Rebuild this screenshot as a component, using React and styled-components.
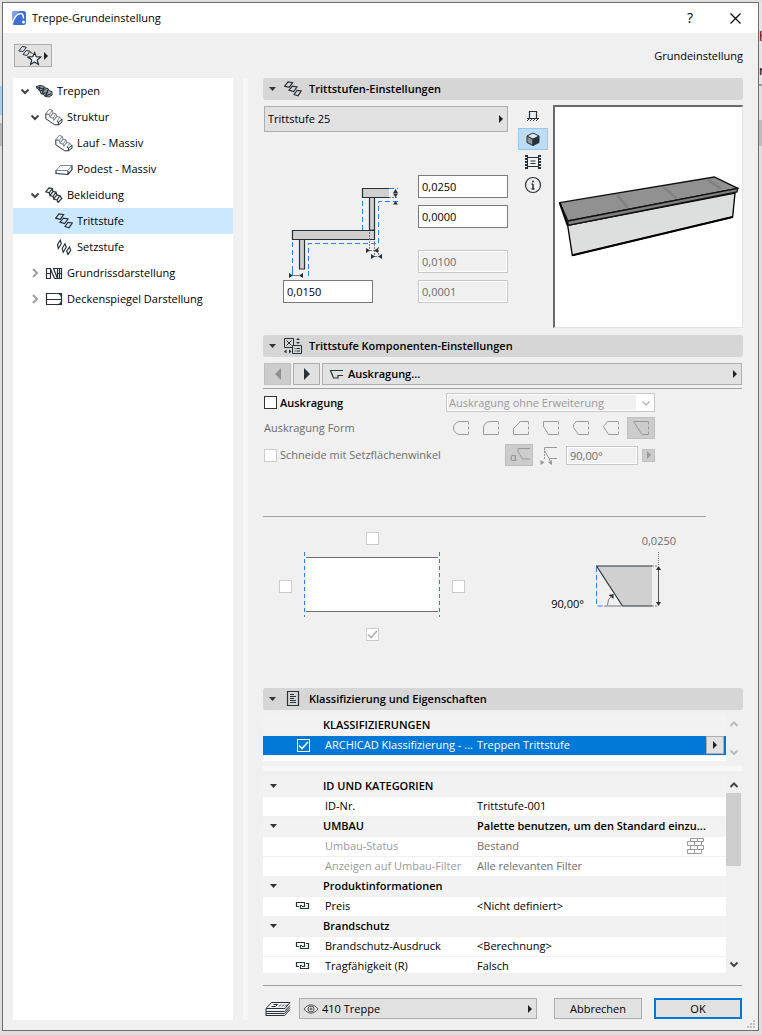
import React, { useState } from 'react';
import styled, { createGlobalStyle } from 'styled-components';

const INK = '#26323a';
const BLUE = '#2a7fff';

const GlobalStyle = createGlobalStyle`
  * {
    box-sizing: border-box;
  }

  body {
    margin: 0;
    background: #dedede;
  }

  body, button, input, select {
    font-family: "Open Sans", "Noto Sans", sans-serif;
    font-size: 11px;
    line-height: 16px;
    color: #000;
  }

  svg {
    display: block;
    flex: none;
  }
`;

const Desktop = styled.div`
  display: flex;
  min-height: 100vh;
  padding: 2px 0 4px;
`;

const Backdrop = styled.div`
  flex: none;
  width: ${props => props.$width};
  overflow: hidden;
  background: ${props => props.$fill};
`;

const Snippet = styled.div`
  height: 34px;
  color: ${props => props.$color};
  font-size: 12px;
  font-weight: 600;

  &:first-child {
    margin-top: 27px;
  }
`;

const Window = styled.main`
  flex: 1;
  min-width: 0;
  display: flex;
  flex-direction: column;
  border: 1px solid #6e6e6e;
  background: #f0f0f0;
`;

const TitleBar = styled.header`
  display: flex;
  align-items: center;
  height: 30px;
  padding: 0 13px 0 8px;
  gap: 5px;
  background: #fff;
`;

const Title = styled.h1`
  flex: 1;
  margin: 0;
  font-size: 11px;
  font-weight: normal;
`;

const TitleButton = styled.button`
  display: flex;
  align-items: center;
  justify-content: center;
  width: 20px;
  height: 20px;
  margin-left: 20px;
  padding: 0;
  border: 0;
  background: none;
  font-size: 14px;
`;

const Toolbar = styled.div`
  display: flex;
  align-items: center;
  justify-content: space-between;
  height: 45px;
  padding: 0 15px 0 11px;
`;

const FavoriteButton = styled.button`
  display: flex;
  align-items: center;
  width: 38px;
  height: 23px;
  padding: 0 3px;
  border: 1px solid #adadad;
  background: #e1e1e1;
`;

const Body = styled.div`
  flex: 1;
  display: flex;
  padding: 0 15px 0 10px;
`;

const Tree = styled.ul`
  flex: none;
  width: 220px;
  margin: 0;
  padding: 0;
  list-style: none;
  background: #fff;
`;

const TreeRow = styled.li`
  display: flex;
  align-items: center;
  gap: 4px;
  height: 26px;
  padding-left: ${props => 6 + props.$level * 10}px;
  background: ${props => (props.$selected ? '#cce8ff' : 'transparent')};
  cursor: default;
`;

const TreeSlot = styled.span`
  display: flex;
  justify-content: center;
  width: ${props => props.$width};
`;

const Splitter = styled.div`
  flex: none;
  width: 5px;
  margin: 0 15px 0 10px;
  background: #f7f7f7;
`;

const Content = styled.div`
  flex: 1;
  min-width: 0;
`;

const SectionHeader = styled.h2`
  display: flex;
  align-items: center;
  height: 22px;
  margin: 0;
  padding: 0 5px;
  gap: 7px;
  border-radius: 3px;
  background: #d6d6d6;
  font-size: 11px;
  font-weight: 600;
`;

const HeaderIcon = styled.span`
  display: flex;
  justify-content: center;
  width: 18px;
`;

const Treads = styled.div`
  display: flex;
  padding: 5px 0 7px 1px;
`;

const TreadForm = styled.div`
  flex: 1;
  min-width: 0;
  padding-top: 1px;
`;

const PickerFrame = styled.label`
  flex: ${props => (props.$grow ? 1 : 'none')};
  display: flex;
  align-items: center;
  height: ${props => props.$height};
  padding: 0 2px 0 ${props => (props.$inset ? props.$inset : '3px')};
  gap: ${props => (props.$inset ? '5px' : '3px')};
  border: 1px solid #adadad;
  background: #e1e1e1;
`;

const PickerSelect = styled.select`
  flex: 1;
  min-width: 0;
  padding: 0;
  border: 0;
  outline: 0;
  background: transparent;
  appearance: none;
  font-weight: ${props => (props.$bold ? 600 : 'normal')};
`;

const Measures = styled.div`
  display: flex;
  justify-content: space-between;
  padding: 43px 0 0 19px;
`;

const FieldStack = styled.div`
  display: flex;
  flex-direction: column;
  gap: 7px;
`;

const FieldPair = styled.div`
  display: flex;
  flex-direction: column;
  gap: 7px;

  & + & {
    margin-top: 15px;
  }
`;

const Field = styled.input`
  width: ${props => props.$width || '90px'};
  height: ${props => props.$height || '23px'};
  padding: 0 3px;
  border: 1px solid #7a7a7a;
  border-radius: 0;
  background: #fff;

  &:disabled {
    border-color: #c8c8c8;
    background: #f0f0f0;
    box-shadow: inset 0 0 0 1px #fff;
    color: #6d6d6d;
  }
`;

const ViewModes = styled.div`
  display: flex;
  flex-direction: column;
  gap: 1px;
  margin: 0 5px 0 10px;
`;

const ViewButton = styled.button`
  display: flex;
  align-items: center;
  justify-content: center;
  width: 30px;
  height: 22px;
  padding: 0;
  border: 1px solid ${props => (props.$active ? '#90c8f6' : 'transparent')};
  background: ${props => (props.$active ? '#c0dcf3' : 'transparent')};
`;

const Preview = styled.div`
  width: 190px;
  height: 223px;
  border: solid;
  border-width: 2px 1px 1px 2px;
  border-color: #696969 #e3e3e3 #e3e3e3 #696969;
  background: #fff;
`;

const Pager = styled.div`
  display: flex;
  gap: 2px;
  padding: 6px 1px 3px;
`;

const PagerButton = styled.button`
  display: flex;
  align-items: center;
  justify-content: center;
  width: 27px;
  height: 22px;
  padding: 0;
  border: 1px solid #adadad;
  background: #e1e1e1;

  &:disabled {
    border-color: #bfbfbf;
    background: #ccc;
  }
`;

const Rule = styled.hr`
  height: 1px;
  margin: ${props => props.$top || '0'} ${props => props.$right || '1px'} 0 0;
  border: 0;
  background: #a0a0a0;
`;

const SettingRows = styled.div`
  display: flex;
  flex-direction: column;
  gap: 5px;
  padding: 4px 0 50px 1px;
`;

const SettingRow = styled.div`
  display: flex;
  align-items: center;
  gap: 3px;
  height: ${props => props.$height};
  padding-right: 88px;
`;

const RowLabel = styled.label`
  flex: 1;
  display: flex;
  align-items: center;
  gap: 3px;
  color: ${props => (props.$muted ? '#6d6d6d' : '#000')};
  font-weight: ${props => (props.$bold ? 600 : 'normal')};
`;

const checkMark = color =>
  `url("data:image/svg+xml,%3Csvg xmlns='http://www.w3.org/2000/svg' viewBox='0 0 11 11'%3E%3Cpath d='M1 5.500l3 3 6-6.500' fill='none' stroke='%23${color}' stroke-width='1.700'/%3E%3C/svg%3E")`;

const Check = styled.input`
  flex: none;
  width: 13px;
  height: 13px;
  margin: 0;
  border: 1px solid ${props => (props.$inverse ? '#fff' : '#333')};
  background: ${props => (props.$inverse ? 'transparent' : '#fff')};
  appearance: none;

  &:checked {
    background-image: ${checkMark('ffffff')};
  }

  &:disabled {
    border-color: #ccc;
  }

  &:disabled:checked {
    background-image: ${checkMark('b0b0b0')};
  }
`;

const ComboFrame = styled.span`
  display: flex;
  align-items: center;
  width: 209px;
  height: 19px;
  padding: 1px 3px 1px 1px;
  border: 1px solid #c8c8c8;
  background: #fff;
`;

const ComboSelect = styled.select`
  flex: 1;
  min-width: 0;
  height: 15px;
  margin-right: 5px;
  padding: 0 0 0 1px;
  border: 0;
  background: #f0f0f0;
  appearance: none;
  line-height: 15px;

  &:disabled {
    color: #9a9a9a;
    opacity: 1;
  }
`;

const ShapeGroup = styled.div`
  display: flex;
  gap: 2px;
`;

const ShapeButton = styled.button`
  display: flex;
  align-items: center;
  justify-content: center;
  width: 28px;
  height: 22px;
  padding: 0;
  border: 1px solid ${props => (props.$active ? '#bfbfbf' : 'transparent')};
  background: ${props => (props.$active ? '#ccc' : 'transparent')};
`;

const StepButton = styled.button`
  display: flex;
  align-items: center;
  justify-content: center;
  width: 13px;
  height: 13px;
  margin: 0 0 0 1px;
  padding: 0;
  border: 1px solid #bfbfbf;
  background: #ccc;
`;

const Figures = styled.div`
  display: flex;
  justify-content: space-between;
  padding: 15px 67px 47px 16px;
`;

const EdgePicker = styled.div`
  display: grid;
  grid-template-columns: 13px 136px 13px;
  grid-template-rows: 13px 69px 13px;
  gap: 7px 12px;
  place-items: center;
  grid-template-areas:
    ". top ."
    "left plate right"
    ". bottom .";
`;

const EdgeCheck = styled(Check)`
  grid-area: ${props => props.$side};
`;

const Plate = styled.div`
  grid-area: plate;
`;

const AngleFigure = styled.div`
  display: grid;
  grid-template-columns: auto 80px;
  align-content: start;
  gap: 3px 12px;
  padding-top: 1px;
`;

const FigureLabel = styled.span`
  align-self: end;
  justify-self: end;
  grid-column: ${props => props.$column};
  color: ${props => (props.$muted ? '#6d6d6d' : '#000')};
`;

const Pane = styled.div`
  display: flex;
  height: ${props => props.$height};
  margin-top: 5px;
  overflow: hidden;
`;

const PaneBody = styled.div`
  flex: 1;
  min-width: 0;
  background: #fff;
  overflow: hidden;
`;

const PaneSplitter = styled.div`
  height: 5px;
  margin-top: 5px;
  background: #f7f7f7;
`;

const Grid = styled.table`
  width: 100%;
  table-layout: fixed;
  border-collapse: collapse;
`;

const GridRow = styled.tr`
  height: 20px;
  color: ${props => (props.$selected ? '#fff' : props.$muted ? '#9a9a9a' : '#000')};
  background: ${props => (props.$selected ? '#0078d7' : props.$group ? '#f2f2f2' : '#fff')};
  border-bottom: 1px solid #f0f0f0;
  font-weight: ${props => (props.$group ? 600 : 'normal')};
`;

const Cell = styled.td`
  height: 20px;
  padding: 0 0 0 ${props => props.$indent || '0'};
  line-height: 18px;
  white-space: nowrap;
  text-align: left;
  font-weight: inherit;
  color: ${props => props.$color || 'inherit'};
`;

const CellCenter = styled.div`
  display: flex;
  align-items: center;
  justify-content: ${props => props.$align || 'center'};
`;

const MoreButton = styled.button`
  display: flex;
  align-items: center;
  justify-content: center;
  width: 18px;
  height: 18px;
  margin-right: 2px;
  padding: 0;
  border: 1px solid #adadad;
  background: #e1e1e1;
`;

const Scrollbar = styled.div`
  flex: none;
  display: flex;
  flex-direction: column;
  align-items: center;
  width: 17px;
  padding: 4px 2px 4px 0;
`;

const ScrollThumb = styled.div`
  width: 15px;
  height: 73px;
  margin-top: 3px;
  background: #cdcdcd;
`;

const ScrollSpace = styled.div`
  flex: 1;
`;

const Footer = styled.footer`
  display: flex;
  align-items: center;
  gap: 12px;
  padding: 12px 1px 0 2px;
`;

const LayerPicker = styled.div`
  flex: 1;
  display: flex;
  align-items: center;
  gap: 8px;
  margin-right: 5px;
`;

const DialogButton = styled.button`
  width: 88px;
  height: 21px;
  padding: 0;
  border: ${props => (props.$primary ? '2px solid #0078d7' : '1px solid #adadad')};
  background: #e1e1e1;
  line-height: 14px;
`;

const GripRow = styled.div`
  display: flex;
  justify-content: flex-end;
  height: 10px;
  padding-right: 2px;
`;

const ArrowRight = ({ color = '#222' }) => (
  <svg width="8" height="8" viewBox="0 0 8 8">
    <path d="M2 0l4 4-4 4z" fill={color} />
  </svg>
);

const Caret = () => (
  <svg width="9" height="6" viewBox="0 0 9 6">
    <path d="M1 1h7L4.500 5z" fill="#333" />
  </svg>
);

const Chevron = ({ dir = 'down', color = '#444', thin }) => {
  const paths = { down: 'M1.500 3.500L5 7l3.500-3.500', up: 'M1.500 7L5 3.500 8.500 7', right: 'M3 1l4 4-4 4' };
  return (
    <svg width="10" height="10" viewBox="0 0 10 10">
      <path d={paths[dir]} fill="none" stroke={color} strokeWidth={thin ? 1.2 : 2} />
    </svg>
  );
};

const Icon = ({ w = 18, h = 16, color = INK, children }) => (
  <svg width={w} height={h} viewBox={`0 0 ${w} ${h}`} fill="none" stroke={color}>
    {children}
  </svg>
);

const TreadIcon = () => (
  <Icon>
    <path d="M.7 5.200L4 1l4.600.700-3.300 4.600zM5 9.200l3.500-4L13 6l-3.400 4.500zM10 13.500L13 9.300l4.300.700-3.300 4.700z" strokeWidth="1.200" />
  </Icon>
);

const RiserIcon = () => (
  <Icon>
    <path d="M2.500 5.500l2.800-4.300 1 3.500-3 4.800zM7.200 9.200L10 4.800l1.200 3.500-3 5zM11.700 12l2.800-4 1.200 3.300-2.800 4.200z" strokeWidth="1.200" />
  </Icon>
);

const StairIcon = () => (
  <Icon>
    <path d="M1 4.500l2.500-2 5 .5 1.500 2 3 .500 1 2.200 3 .800v3.500l-3 2-4-.500-1.500-2.300-2.500-.500L5 7.500z" fill="#9aa1a5" />
    <path d="M1 3.500l6 2.200 3-1.200M4.500 8l6-1.500M6.500 11l6.500-2M9.500 13l6.500-2M5 3.500L4 7.500M9 4.500L7.500 10M13 6.500l-2 6" strokeWidth="1.200" />
  </Icon>
);

const SolidStairIcon = () => (
  <Icon w={18} h={18}>
    <path
      d="M.8 5.800L4 1.500l3.300.700-3 4.300zM.8 5.800L4.300 6.500 5 9.200l3-4-.7-3M5 9.200l3-4 3 .700-3 4.300zM8 9.900l.8 2.500 3-4-.8-2.500M8.800 12.400l3-4 3 .700-2.800 4.300M14.800 9.100l2 2.500"
      stroke="#7d868b"
    />
    <path d="M.8 5.800v5l9 6h3.700l3.500-2.600v-3l-3.500 2.800-1.500-.600M13.500 14v2.800" />
  </Icon>
);

const LandingIcon = () => (
  <Icon>
    <path d="M1 9.500l4.500-5H17L13 9.500z" stroke="#7d868b" />
    <path d="M1 9.500v3l12 1L17 8.500v-4M13 10v3.500" strokeWidth="1.200" />
  </Icon>
);

const CladdingIcon = () => (
  <Icon>
    <path d="M.8 4.800L4 .8l3.300.700-3 4.300zM4.300 5.800L5 8.500l3-4-.700-3M5 8.500l3-4 3 .700-3 4.300zM8 9.500l.8 2.500 3-4-.8-2.800M8.800 12l3-4 3 .700-2.800 4.300zM12 13l1 2.500 3.800-4-2-2.800" strokeWidth="1.200" />
  </Icon>
);

const FloorPlanIcon = () => (
  <Icon>
    <path
      d="M1.500 3.500v10h4v-10zM1.500 8.500h4M5.500 4l4 9.500M8 3.500h8.500v10H9.500M8.500 3.500l4 10v-10M14.500 3.500v10M12.500 8.500h4"
      strokeWidth="1.200"
    />
  </Icon>
);

const CeilingIcon = () => (
  <Icon>
    <path d="M1.500 2.500h15v11h-15zM1.500 8.500h15M13.500 2.500q3 1 3 4M13.500 13.500q3-1 3-4" strokeWidth="1.200" />
  </Icon>
);

const ComponentIcon = () => (
  <Icon w={20} h={18}>
    <path d="M1.500 1.500h9v9h-9zM3.500 3.500l5 5M8.500 3.500l-5 5" />
    <path d="M9.500 8.500h9v8h-9z" fill="#d6d6d6" />
    <path d="M11.500 11.500h1M13.500 11.500H17M11.500 14h1M13.500 14H17" />
    <path d="M13 3h4l-2-2zM13 5h4l-2 2zM3.500 12.500v4l-2.500-2zM6 12.500v4l2.500-2z" fill={INK} stroke="none" />
  </Icon>
);

const SheetIcon = () => (
  <Icon w={14} h={16}>
    <path d="M1.500.500h11v14h-11z" strokeWidth="1.200" />
    <path d="M4 3.500h4M4 5.500h6M4 7.500h4M4 9.500h6M4 11.500h6" />
  </Icon>
);

const NosingIcon = () => (
  <Icon w={14} h={10}>
    <path d="M14 1.500H1.500L4.500 9H9V6.500h5" strokeWidth="1.200" />
  </Icon>
);

const FavoriteIcon = () => (
  <Icon w={24} h={21}>
    <path d="M.8 6L4 1.500l4.300.700L5.200 6.500zM5 9.500L8.200 5.500l3.800.700L9 10.500zM9.500 12.500l2 1M12 7l2.500 1.500" />
    <path
      d="M16.500 7.500l1.700 4.200 4.500.300-3.500 3 1.200 4.500-3.900-2.500-3.900 2.500 1.200-4.500-3.500-3 4.500-.300z"
      fill="#f6f6f6"
      strokeWidth="1.200"
    />
  </Icon>
);

const AppIcon = () => (
  <svg width="16" height="16" viewBox="0 0 16 16">
    <rect x="1" y="1" width="14" height="14" rx="2.500" fill="#3f6fd0" />
    <path d="M1 3.500Q1 1 3.500 1H9Q3 4 1 12z" fill="#7ea2e8" />
    <path d="M1 14.500C2.500 8 6 3.500 9.500 3.500c2.500 0 3 2 3 5" fill="none" stroke="#fff" strokeWidth="1.500" />
    <circle cx="12.500" cy="12" r="1.500" fill="#fff" />
  </svg>
);

const FloorViewIcon = () => (
  <Icon w={14} h={12}>
    <path d="M3.500 8.500v-7h7v7M1 8.500h12" strokeWidth="1.200" />
    <path d="M1 11l2-2M4 11l2-2M7 11l2-2M10 11l2-2" />
  </Icon>
);

const CubeIcon = () => (
  <Icon w={14} h={14}>
    <path d="M1 4v6.500L7 13.500V7z" fill="#8d9498" />
    <path d="M13 4v6.500L7 13.500V7z" fill={INK} />
    <path d="M1 4l6-3 6 3-6 3z" fill="#dbe9f4" />
  </Icon>
);

const FilmIcon = () => (
  <Icon w={18} h={16}>
    <path d="M3.500 3.500h11M3.500 12.500h11M6.500 7h5M6.500 9.500h5" strokeWidth="1.200" />
    <path d="M3.500 1v14M14.500 1v14" />
    <path d="M2 1v14M16 1v14" strokeWidth="2" strokeDasharray="2 1" />
  </Icon>
);

const InfoIcon = () => (
  <Icon w={18} h={18}>
    <circle cx="9" cy="9" r="7.500" strokeWidth="1.200" />
    <path d="M9 8v5M7.500 8H9M7.500 13h3" strokeWidth="1.500" />
    <circle cx="9" cy="5.500" r="1" fill={INK} stroke="none" />
  </Icon>
);

const LinkIcon = () => (
  <Icon w={16} h={10}>
    <path d="M4 5.500H1.500v-4h8v4H7M11 2.500h2.500v5h-8v-3H7" strokeWidth="1.200" />
  </Icon>
);

const BrickIcon = () => (
  <Icon w={18} h={16} color="#9a9a9a">
    <path d="M3.500.500h13v3h-13zM.500 3.500h14v4H.500zM3.500 7.500h13v4h-13zM.500 11.500h14v4H.500zM10.500.500v3M7.500 3.500v4M10.500 7.500v4M7.500 11.500v4" />
  </Icon>
);

const EyeIcon = () => (
  <Icon w={16} h={12} color="#555">
    <path d="M1 6c4-5.500 10-5.500 14 0-4 5.500-10 5.500-14 0z" />
    <circle cx="8" cy="6" r="3" />
    <circle cx="8" cy="6" r="1" />
  </Icon>
);

const LayersIcon = () => (
  <Icon w={26} h={16}>
    <path d="M1 7.500L6.500 1.500H25L20 7.500zM1 10.500h18.500l5.500-6M1 12.500h18.500l5.500-6M1 14.500h18.500L25 8.500M1 8v7" />
    <path d="M8.500 3.500h4l-2 2H6.500M16 3.500l-2 2M19 3.500l-2 2M22 3.500l-2 2" />
  </Icon>
);

const shapePaths = [
  'M16 1.500H8a6.500 6.500 0 000 13h8',
  'M16 1.500H8a6.500 6.500 0 00-6.500 6.500v6.500H16',
  'M16 1.500H8.500l-7 7v6H16',
  'M16 1.500H1.500v5l5 8H16',
  'M16 1.500H4.500l-3 3v3l5 7H16',
  'M16 1.500H5.500l-4 5 5 8H16',
  'M16 1.500H1.500l8.500 13h6',
];

const ShapeIcon = ({ d }) => (
  <Icon w={18} h={16} color="#999">
    <path d={d} />
    <path d="M16.500 1.500v13" strokeDasharray="3 2" />
  </Icon>
);

const AngleIcon = () => (
  <Icon w={24} h={20} color="#999">
    <path d="M23 3.500H11v3l4.500 7.500H23" />
    <text x="3" y="16" fontSize="11" fill="#8a8a8a" stroke="none">α</text>
  </Icon>
);

const OffsetIcon = () => (
  <Icon w={22} h={20} color="#999">
    <path d="M19 2.500H6.500v3l4.500 8h8" />
    <path d="M6.500 6v9M11.500 14v3" strokeDasharray="2 1" />
    <path d="M2.500 15v5l4-2.500zM14 15v5l-4-2.500z" fill="#999" stroke="none" />
  </Icon>
);

const TreadDrawing = () => (
  <svg width="120" height="96" viewBox="0 0 120 96" fill="none" stroke={INK}>
    <path d="M9.500 55.500h82v9h-82zM106 22.500H79.500v-9H106" fill="#d0d0d0" strokeWidth="1.200" />
    <path d="M86.500 23v32h5V23M16.500 65v29h5V65" fill="#d0d0d0" strokeWidth="1.200" />
    <path
      d="M106 13.500h9M79.500 26v29M115 26.500H95.500v42h-70V96M9.500 67v29"
      stroke={BLUE}
      strokeDasharray="5 3"
    />
    <path d="M86.500 57v19M91.500 66v16M106 22.500h9M95.500 72v10M84 75.500h10M89 81.500h10" stroke="#777" strokeDasharray="2 1" />
    <path
      d="M110 18l2.500-4 2.500 4zM110 18.500l2.500 4 2.500-4zM110 29.500l2.500-3.500 2.500 3.500zM83 73v5l4-2.500zM95 73v5l-4-2.500zM88 79v5l4-2.500zM99 79v5l-4-2.500z"
      fill={INK}
      stroke="none"
    />
  </svg>
);

const GapArrows = () => (
  <svg width="30" height="9" viewBox="0 0 30 9">
    <path d="M6 2v5l4-2.500zM20 2v5l-4-2.500z" fill={INK} />
    <path d="M10 4.500h6" stroke="#777" />
    <path d="M9.500 0v8M25.500 0v8" stroke={BLUE} strokeDasharray="5 3" />
  </svg>
);

const StepPreview = () => (
  <svg width="186" height="219" viewBox="134 36 558 657">
    <path d="M172 391L674 294 667 366 186 481z" fill="#dddede" stroke="#000" strokeWidth="4" />
    <path d="M186 481L667 366" stroke="#000" strokeWidth="6" />
    <path d="M148 323L612 246 682 280 173 378z" fill="#919191" stroke="#111" strokeWidth="4" />
    <path d="M320 298l32 40M458 275l40 34M592 254l40 28" stroke="#828282" strokeWidth="8" />
    <path d="M173 378L682 280 680 291 172 391z" fill="#808080" stroke="#111" strokeWidth="4" />
    <path d="M148 323L172 391" stroke="#000" strokeWidth="6" />
  </svg>
);

const PlateDrawing = () => (
  <svg width="136" height="69" viewBox="0 0 136 69">
    <path d="M2 5.500h132v54H2z" fill="#fff" />
    <path d="M2 5.500h132M2 59.500h132" stroke="#6d6d6d" />
    <path d="M.5 0v65M135.500 0v65" stroke={BLUE} strokeDasharray="4 3" />
  </svg>
);

const AngleDrawing = () => (
  <svg width="80" height="60" viewBox="0 0 80 60" fill="none" stroke={INK}>
    <path d="M.5 14L26.500 54H56V14z" fill="#d0d0d0" stroke="none" />
    <path d="M56 14H.5L26.500 54H56" strokeWidth="1.200" />
    <path d="M.5 15v39h7" stroke={BLUE} strokeDasharray="5 3" />
    <path d="M62.500 0v14" stroke="#777" strokeDasharray="1 1" />
    <path d="M56 14h6M56 54h6" stroke="#777" strokeDasharray="2 1" />
    <path d="M62.500 16v36" stroke="#555" />
    <path d="M60 18l2.500-4 2.500 4zM60 50l2.500 4 2.500-4zM12.500 43l5-1v5z" fill={INK} stroke="none" />
    <path d="M8 54h17M11.500 53q0-6 4-9" stroke="#777" />
  </svg>
);

const Grip = () => (
  <svg width="9" height="9" viewBox="0 0 9 9" fill="#bfbfbf">
    <path d="M6 0h2v2H6zM3 3h2v2H3zM6 3h2v2H6zM0 6h2v2H0zM3 6h2v2H3zM6 6h2v2H6z" />
  </svg>
);

const treeItems = [
  { label: 'Treppen', level: 0, arrow: 'down', Glyph: StairIcon },
  { label: 'Struktur', level: 1, arrow: 'down', Glyph: SolidStairIcon },
  { label: 'Lauf - Massiv', level: 2, Glyph: SolidStairIcon },
  { label: 'Podest - Massiv', level: 2, Glyph: LandingIcon },
  { label: 'Bekleidung', level: 1, arrow: 'down', Glyph: CladdingIcon },
  { label: 'Trittstufe', level: 2, Glyph: TreadIcon },
  { label: 'Setzstufe', level: 2, Glyph: RiserIcon },
  { label: 'Grundrissdarstellung', level: 1, arrow: 'right', Glyph: FloorPlanIcon },
  { label: 'Deckenspiegel Darstellung', level: 1, arrow: 'right', Glyph: CeilingIcon },
];

const properties = [
  { name: 'ID UND KATEGORIEN', group: true },
  { name: 'ID-Nr.', value: 'Trittstufe-001' },
  { name: 'UMBAU', value: 'Palette benutzen, um den Standard einzu...', group: true },
  { name: 'Umbau-Status', value: 'Bestand', muted: true, bricks: true },
  { name: 'Anzeigen auf Umbau-Filter', value: 'Alle relevanten Filter', muted: true },
  { name: 'Produktinformationen', group: true },
  { name: 'Preis', value: '<Nicht definiert>', linked: true },
  { name: 'Brandschutz', group: true },
  { name: 'Brandschutz-Ausdruck', value: '<Berechnung>', linked: true },
  { name: 'Tragfähigkeit (R)', value: 'Falsch', linked: true },
];

const Picker = ({ label, value, icon, bold, grow, inset, height = '22px' }) => (
  <PickerFrame $grow={grow} $inset={inset} $height={height}>
    {icon}
    <PickerSelect aria-label={label} $bold={bold}>
      <option>{value}</option>
    </PickerSelect>
    <ArrowRight />
  </PickerFrame>
);

const Section = ({ title, icon }) => (
  <SectionHeader>
    <Caret />
    <HeaderIcon>{icon}</HeaderIcon>
    {title}
  </SectionHeader>
);

const GridColumns = () => (
  <colgroup>
    <col style={{ width: 20 }} />
    <col style={{ width: 40 }} />
    <col style={{ width: 152 }} />
    <col />
    <col style={{ width: 39 }} />
  </colgroup>
);

const TreadSettings = () => {
  const [mode, setMode] = useState('3D');
  const modes = [
    ['Grundriss', FloorViewIcon],
    ['3D', CubeIcon],
    ['Vorschau', FilmIcon],
    ['Info', InfoIcon],
  ];

  return (
    <Treads>
      <TreadForm>
        <Picker label="Trittstufe" value="Trittstufe 25" height="26px" />
        <Measures>
          <div>
            <TreadDrawing />
            <GapArrows />
            <Field aria-label="Abstand" defaultValue="0,0150" />
          </div>
          <FieldStack>
            <FieldPair>
              <Field aria-label="Dicke" defaultValue="0,0250" />
              <Field aria-label="Fuge" defaultValue="0,0000" />
            </FieldPair>
            <FieldPair>
              <Field aria-label="Setzstufe Dicke" defaultValue="0,0100" disabled />
              <Field aria-label="Setzstufe Fuge" defaultValue="0,0001" disabled />
            </FieldPair>
          </FieldStack>
        </Measures>
      </TreadForm>
      <ViewModes>
        {modes.map(([name, Glyph]) => (
          <ViewButton key={name} aria-label={name} $active={mode === name} onClick={() => setMode(name)}>
            <Glyph />
          </ViewButton>
        ))}
      </ViewModes>
      <Preview>
        <StepPreview />
      </Preview>
    </Treads>
  );
};

const ComponentSettings = () => (
  <>
    <Pager>
      <PagerButton aria-label="Zurück" disabled>
        <svg width="12" height="12" viewBox="0 0 12 12"><path d="M9 0v12L3 6z" fill="#8f8f8f" /></svg>
      </PagerButton>
      <PagerButton aria-label="Weiter">
        <svg width="12" height="12" viewBox="0 0 12 12"><path d="M3 0v12l6-6z" fill={INK} /></svg>
      </PagerButton>
      <Picker label="Seite" value="Auskragung..." icon={<NosingIcon />} bold grow inset="6px" />
    </Pager>
    <Rule />
    <SettingRows>
      <SettingRow $height="19px">
        <RowLabel $bold>
          <Check type="checkbox" />
          Auskragung
        </RowLabel>
        <ComboFrame>
          <ComboSelect aria-label="Auskragung Erweiterung" disabled>
            <option>Auskragung ohne Erweiterung</option>
          </ComboSelect>
          <Chevron thin color="#aaa" />
        </ComboFrame>
      </SettingRow>
      <SettingRow $height="22px">
        <RowLabel as="span" $muted>Auskragung Form</RowLabel>
        <ShapeGroup>
          {shapePaths.map((d, i) => (
            <ShapeButton key={d} aria-label={`Form ${i + 1}`} disabled $active={i === 6}>
              <ShapeIcon d={d} />
            </ShapeButton>
          ))}
        </ShapeGroup>
      </SettingRow>
      <SettingRow $height="22px">
        <RowLabel $muted>
          <Check type="checkbox" disabled />
          Schneide mit Setzflächenwinkel
        </RowLabel>
        <ShapeGroup>
          <ShapeButton aria-label="Winkel" disabled $active>
            <AngleIcon />
          </ShapeButton>
          <ShapeButton aria-label="Abstand" disabled>
            <OffsetIcon />
          </ShapeButton>
        </ShapeGroup>
        <Field aria-label="Schnittwinkel" defaultValue="90,00°" $width="72px" $height="19px" disabled />
        <StepButton aria-label="Winkel wählen" disabled>
          <ArrowRight color="#999" />
        </StepButton>
      </SettingRow>
    </SettingRows>
    <Rule $right="37px" />
    <Figures>
      <EdgePicker>
        <EdgeCheck type="checkbox" aria-label="Oben" $side="top" disabled />
        <EdgeCheck type="checkbox" aria-label="Links" $side="left" disabled />
        <Plate>
          <PlateDrawing />
        </Plate>
        <EdgeCheck type="checkbox" aria-label="Rechts" $side="right" disabled />
        <EdgeCheck type="checkbox" aria-label="Unten" $side="bottom" defaultChecked disabled />
      </EdgePicker>
      <AngleFigure>
        <FigureLabel $column="2" $muted>0,0250</FigureLabel>
        <FigureLabel $column="1">90,00°</FigureLabel>
        <AngleDrawing />
      </AngleFigure>
    </Figures>
  </>
);

const Classification = () => (
  <>
    <Pane $height="46px">
      <PaneBody>
        <Grid>
          <GridColumns />
          <tbody>
            <GridRow $group>
              <Cell />
              <Cell />
              <Cell as="th" colSpan={3}>KLASSIFIZIERUNGEN</Cell>
            </GridRow>
            <GridRow $selected>
              <Cell />
              <Cell>
                <CellCenter>
                  <Check type="checkbox" aria-label="ARCHICAD Klassifizierung" $inverse defaultChecked />
                </CellCenter>
              </Cell>
              <Cell $indent="2px">ARCHICAD Klassifizierung - ...</Cell>
              <Cell $indent="2px">Treppen Trittstufe</Cell>
              <Cell>
                <CellCenter $align="flex-end">
                  <MoreButton aria-label="Klassifizierung wählen">
                    <ArrowRight />
                  </MoreButton>
                </CellCenter>
              </Cell>
            </GridRow>
          </tbody>
        </Grid>
      </PaneBody>
      <Scrollbar>
        <Chevron dir="up" color="#bbb" />
        <ScrollSpace />
        <Chevron color="#bbb" />
      </Scrollbar>
    </Pane>
    <PaneSplitter />
    <Pane $height="197px">
      <PaneBody>
        <Grid>
          <GridColumns />
          <tbody>
            {properties.map(item => (
              <GridRow key={item.name} $group={item.group} $muted={item.muted}>
                <Cell>
                  <CellCenter>{item.group && <Caret />}</CellCenter>
                </Cell>
                <Cell>
                  <CellCenter>{item.linked && <LinkIcon />}</CellCenter>
                </Cell>
                <Cell $indent={item.group ? '0' : '2px'}>{item.name}</Cell>
                <Cell $indent="2px" $color={item.muted && '#6d6d6d'}>{item.value}</Cell>
                <Cell>{item.bricks && <BrickIcon />}</Cell>
              </GridRow>
            ))}
          </tbody>
        </Grid>
      </PaneBody>
      <Scrollbar>
        <Chevron dir="up" />
        <ScrollThumb />
        <ScrollSpace />
        <Chevron />
      </Scrollbar>
    </Pane>
  </>
);

const App = () => {
  const [selected, setSelected] = useState('Trittstufe');

  return (
    <Desktop>
      <GlobalStyle />
      <Backdrop
        $width="2px"
        $fill="linear-gradient(#e4e4e4 84px, #a9d0f0 84px 113px, #e4e4e4 113px 121px, #b8b8b8 121px 144px, #dedede 144px)"
      />
      <Window>
        <TitleBar>
          <AppIcon />
          <Title>Treppe-Grundeinstellung</Title>
          <TitleButton aria-label="Hilfe">?</TitleButton>
          <TitleButton aria-label="Schließen">
            <svg width="11" height="11" viewBox="0 0 11 11">
              <path d="M.5.500l10 10M10.500.500l-10 10" stroke="#000" strokeWidth="1.200" />
            </svg>
          </TitleButton>
        </TitleBar>
        <Toolbar>
          <FavoriteButton aria-label="Favoriten">
            <FavoriteIcon />
            <ArrowRight />
          </FavoriteButton>
          <span>Grundeinstellung</span>
        </Toolbar>
        <Body>
          <Tree role="tree">
            {treeItems.map(({ label, level, arrow, Glyph }) => (
              <TreeRow
                key={label}
                role="treeitem"
                aria-selected={selected === label}
                $level={level}
                $selected={selected === label}
                onClick={() => setSelected(label)}
              >
                <TreeSlot $width="12px">
                  {arrow && <Chevron dir={arrow} color={arrow === 'right' ? '#a0a0a0' : '#444'} />}
                </TreeSlot>
                <TreeSlot $width="18px">
                  <Glyph />
                </TreeSlot>
                {label}
              </TreeRow>
            ))}
          </Tree>
          <Splitter />
          <Content>
            <Section title="Trittstufen-Einstellungen" icon={<TreadIcon />} />
            <TreadSettings />
            <Section title="Trittstufe Komponenten-Einstellungen" icon={<ComponentIcon />} />
            <ComponentSettings />
            <Section title="Klassifizierung und Eigenschaften" icon={<SheetIcon />} />
            <Classification />
            <Rule $top="12px" />
            <Footer>
              <LayerPicker>
                <LayersIcon />
                <Picker label="Ebene" value="410 Treppe" icon={<EyeIcon />} grow height="21px" />
              </LayerPicker>
              <DialogButton>Abbrechen</DialogButton>
              <DialogButton $primary>OK</DialogButton>
            </Footer>
          </Content>
        </Body>
        <GripRow>
          <Grip />
        </GripRow>
      </Window>
      <Backdrop
        $width="3px"
        $fill="linear-gradient(#e4e4e4 82px, #9a9a9a 82px 84px, #e0e0e0 84px 118px, #bdbdbd 118px 144px, #dedede 144px)"
      >
        <Snippet $color="#7a1030">h</Snippet>
        <Snippet $color="#222">n</Snippet>
      </Backdrop>
    </Desktop>
  );
};

export default App;
